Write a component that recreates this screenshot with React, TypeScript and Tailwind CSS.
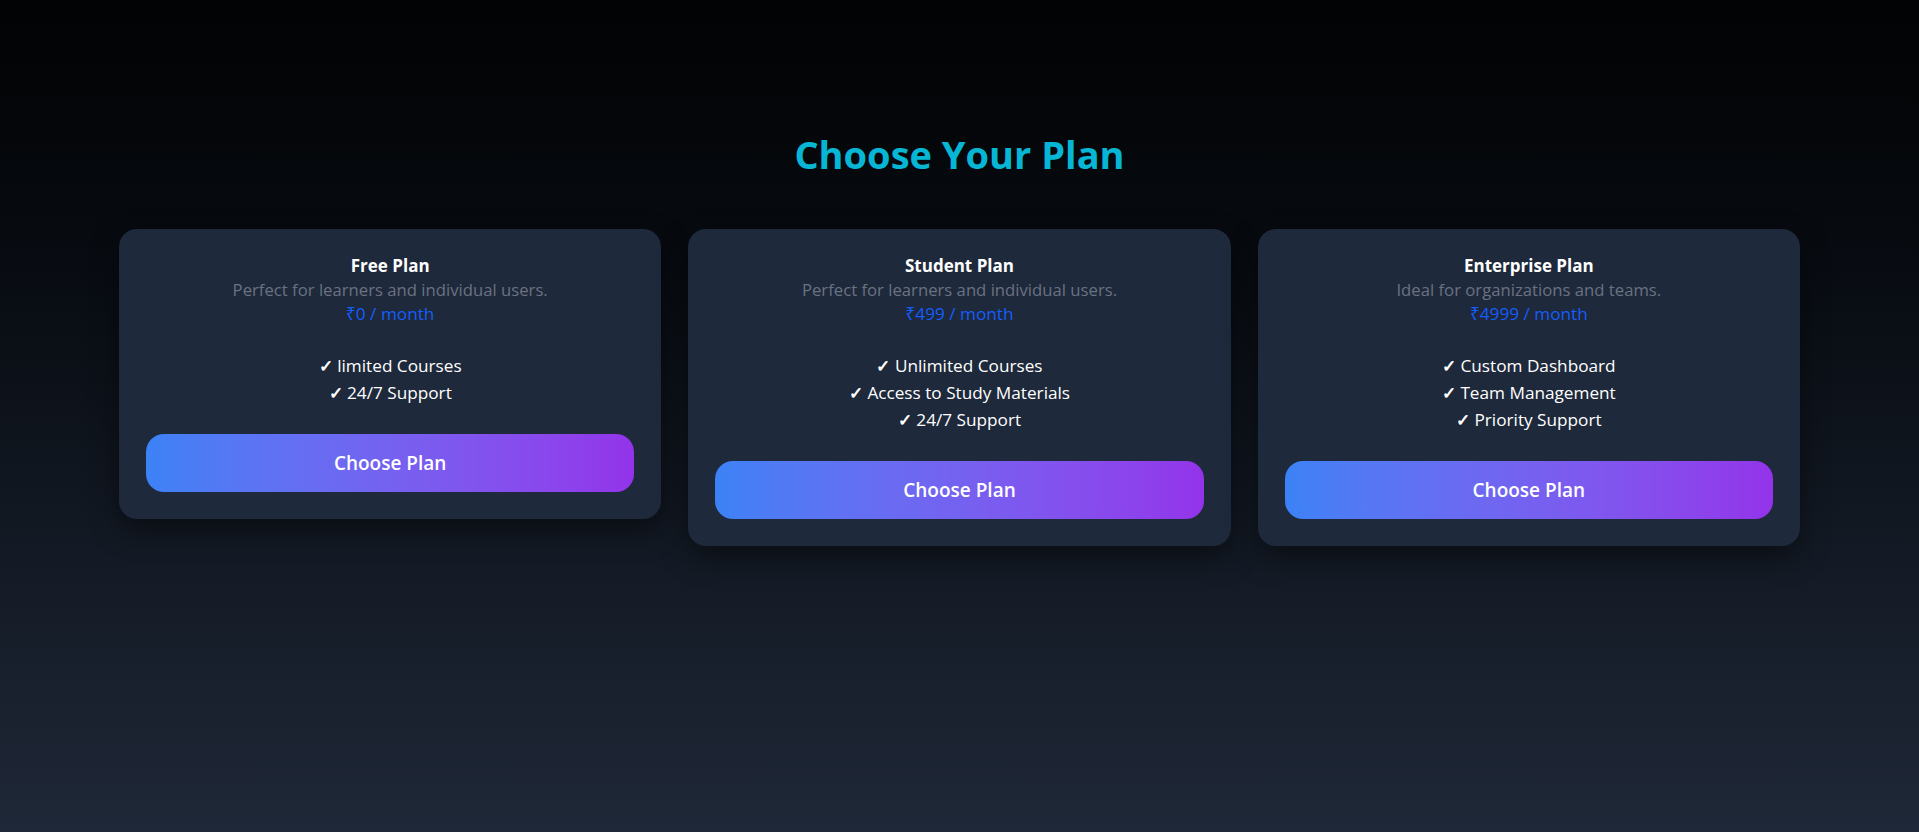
import React from 'react';

interface Plan {
  name: string;
  description: string;
  price: string;
  features: string[];
}

const plans: Plan[] = [
  {
    name: 'Free Plan',
    description: 'Perfect for learners and individual users.',
    price: '₹0 / month',
    features: ['limited Courses', '24/7 Support'],
  },
  {
    name: 'Student Plan',
    description: 'Perfect for learners and individual users.',
    price: '₹499 / month',
    features: ['Unlimited Courses', 'Access to Study Materials', '24/7 Support'],
  },
  {
    name: 'Enterprise Plan',
    description: 'Ideal for organizations and teams.',
    price: '₹4999 / month',
    features: ['Custom Dashboard', 'Team Management', 'Priority Support'],
  },
];

const PlanCard = ({ plan }: { plan: Plan }) => {
  return (
    <div className="bg-[#1e293b] rounded-[18px] pt-[25px] px-[27px] pb-[27px] text-center shadow-[0_12px_30px_rgba(0,0,0,0.45)]">
      <h3 className="text-[17px] leading-[24px] font-bold text-white">{plan.name}</h3>
      <p className="text-[16.7px] leading-[24px] text-gray-500">{plan.description}</p>
      <p className="text-[17.2px] leading-[24px] text-blue-600">{plan.price}</p>

      <ul className="mt-[26px] mb-[28px] text-white">
        {plan.features.map((feature) => (
          <li key={feature} className="text-[17.2px] leading-[27px]">
            <span className="font-bold">✓</span> {feature}
          </li>
        ))}
      </ul>

      <button className="w-full h-[58px] rounded-[18px] bg-linear-to-r from-[#3b82f6] to-[#9333ea] text-white text-[19px] font-semibold">
        Choose Plan
      </button>
    </div>
  );
};

const App = () => {
  return (
    <div
      className="min-h-screen bg-linear-to-b from-[#020304] to-[#1f2838] pt-[132px] px-[119px]"
      style={{ fontFamily: '"Segoe UI", "Open Sans", "Noto Sans", sans-serif' }}
    >
      <h1 className="text-center text-[38px] leading-[44px] font-bold text-[#06b6d4] mb-[53px]">
        Choose Your Plan
      </h1>
      <div className="grid grid-cols-3 gap-[27px] items-start">
        {plans.map((plan) => (
          <PlanCard key={plan.name} plan={plan} />
        ))}
      </div>
    </div>
  );
};

export default App;
